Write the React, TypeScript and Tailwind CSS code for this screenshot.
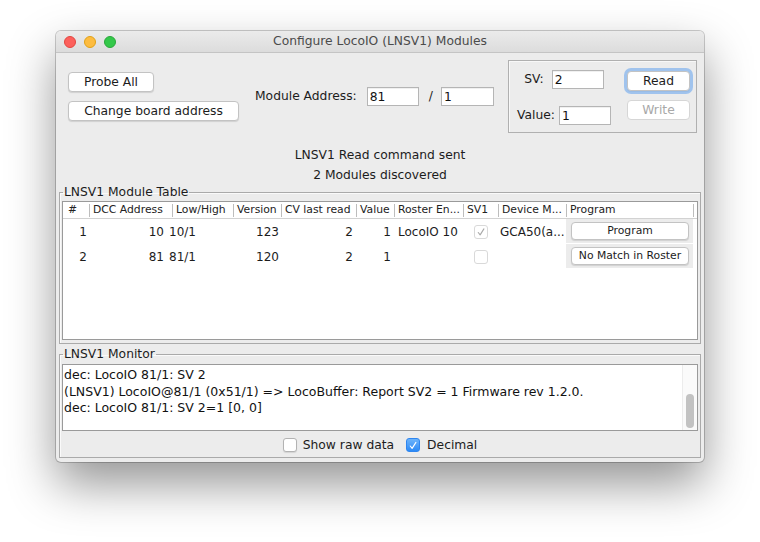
import clsx from 'clsx';
import type { ReactNode } from 'react';

const ui = "font-['DejaVu_Sans',sans-serif]";

function Btn({
  children,
  className,
  disabled,
  focused,
  small,
}: {
  children: ReactNode;
  className?: string;
  disabled?: boolean;
  focused?: boolean;
  small?: boolean;
}) {
  return (
    <button
      type="button"
      disabled={disabled}
      className={clsx(
        'flex items-center justify-center whitespace-nowrap rounded-[4px] border bg-white leading-none shadow-[0_1px_1px_rgba(0,0,0,0.12)]',
        ui,
        small ? 'h-[18px] text-[10.8px]' : 'h-[20px] text-[12.3px]',
        disabled ? 'border-[#d6d6d6] text-[#a8a8a8] shadow-none' : 'border-[#c3c3c3] text-[#1c1c1c]',
        focused && 'border-[#6d9fe0] ring-[3px] ring-[#80b2ee]/70',
        className,
      )}
    >
      {children}
    </button>
  );
}

function Field({ value, className }: { value: string; className?: string }) {
  return (
    <input
      readOnly
      value={value}
      className={clsx(
        'h-[19px] border border-[#b5b5b5] bg-white pl-[2px] text-[12.3px] leading-none text-[#111] shadow-[inset_0_1px_0_rgba(0,0,0,0.06)] outline-none',
        ui,
        className,
      )}
    />
  );
}

function Check({ className }: { className?: string }) {
  return (
    <svg viewBox="0 0 14 14" className={className} fill="none">
      <path d="M3.8 7.6 L6 10.3 L10.4 3.4" stroke="currentColor" strokeWidth="1.3" strokeLinecap="round" strokeLinejoin="round" />
    </svg>
  );
}

// mac-ish checkbox; "dim" is the disabled look used inside the table
function Box({ checked, dim }: { checked?: boolean; dim?: boolean }) {
  if (checked && !dim) {
    return (
      <span className="flex size-[14px] items-center justify-center rounded-[3px] border border-[#2f86f0] bg-gradient-to-b from-[#6cb3fa] to-[#2a8af6] text-white">
        <Check className="size-[13px]" />
      </span>
    );
  }
  return (
    <span
      className={clsx(
        'flex size-[14px] items-center justify-center rounded-[3px] border bg-white',
        dim ? 'border-[#d9d9d9] text-[#a9a9a9]' : 'border-[#b3b3b3] shadow-[0_1px_1px_rgba(0,0,0,0.1)]',
      )}
    >
      {checked && <Check className="size-[12px]" />}
    </span>
  );
}

const headers = [
  { label: '#', w: 'w-[26px]' },
  { label: 'DCC Address', w: 'w-[83px]' },
  { label: 'Low/High', w: 'w-[61px]' },
  { label: 'Version', w: 'w-[48px]' },
  { label: 'CV last read', w: 'w-[75px]' },
  { label: 'Value', w: 'w-[38px]' },
  { label: 'Roster En...', w: 'w-[69px]' },
  { label: 'SV1', w: 'w-[35px]' },
  { label: 'Device M...', w: 'w-[68px]' },
  { label: 'Program', w: 'w-[127px]' },
];

const modules = [
  { n: '1', dcc: '10', lowHigh: '10/1', version: '123', cv: '2', value: '1', roster: 'LocoIO 10', sv1: true, device: 'GCA50(a...', action: 'Program' },
  { n: '2', dcc: '81', lowHigh: '81/1', version: '120', cv: '2', value: '1', roster: '', sv1: false, device: '', action: 'No Match in Roster' },
];

const monitorLines = [
  'dec: LocoIO 81/1: SV 2',
  '(LNSV1) LocoIO@81/1 (0x51/1) => LocoBuffer: Report SV2 = 1 Firmware rev 1.2.0.',
  'dec: LocoIO 81/1: SV 2=1 [0, 0]',
];

function Titled({ title, children, className }: { title: string; children: ReactNode; className?: string }) {
  return (
    <fieldset className={clsx('mx-[3px] border border-[#aaaaaa] px-[2px] shadow-[inset_1px_1px_0_#fafafa]', className)}>
      <legend className="ml-[1px] px-[1px] text-[12.3px] leading-[15px] text-[#1c1c1c]">{title}</legend>
      {children}
    </fieldset>
  );
}

export default function App() {
  return (
    <div className={clsx('h-[542px] w-[760px] overflow-hidden bg-white pt-[31px] pl-[56px]', ui)}>
      <div className="w-[648px] overflow-hidden rounded-[5px] bg-[#ececec] text-[#1c1c1c] shadow-[0_22px_48px_rgba(0,0,0,0.42),0_0_0_1px_rgba(0,0,0,0.2)]">
        {/* title bar */}
        <div className="grid h-[22px] grid-cols-[1fr_auto_1fr] items-center border-b border-[#c4c4c4] bg-gradient-to-b from-[#ebebeb] to-[#dcdcdc]">
          <div className="flex items-center gap-[8px] pl-[8px]">
            <span className="size-[12px] rounded-full border border-[#e2463f] bg-[#fc605c]" />
            <span className="size-[12px] rounded-full border border-[#e1a116] bg-[#fdbc40]" />
            <span className="size-[12px] rounded-full border border-[#2aa73a] bg-[#34c84a]" />
          </div>
          <div className="text-[12.3px] text-[#4b4b4b]">Configure LocoIO (LNSV1) Modules</div>
          <div />
        </div>

        <div className="pb-[4px] text-[12.3px]">
          {/* address + SV row */}
          <div className="flex items-center pt-[7px] pr-[7px] pl-[12px]">
            <div className="flex w-[171px] flex-col gap-[9px]">
              <Btn className="w-[86px]">Probe All</Btn>
              <Btn className="w-[171px]">Change board address</Btn>
            </div>
            <span className="ml-[16px]">Module Address:</span>
            <Field value="81" className="ml-[10px] w-[52px]" />
            <span className="ml-[10px]">/</span>
            <Field value="1" className="ml-[8px] w-[53px]" />

            <div className="ml-auto flex h-[73px] w-[189px] items-center border border-[#b0b0b0] shadow-[inset_1px_1px_0_#f8f8f8]">
              <div className="flex w-[110px] flex-col items-center gap-[17px] pt-[2px]">
                <div className="flex items-center gap-[8px]">
                  <span>SV:</span>
                  <Field value="2" className="w-[52px]" />
                </div>
                <div className="flex items-center gap-[4px]">
                  <span>Value:</span>
                  <Field value="1" className="w-[52px]" />
                </div>
              </div>
              <div className="mb-[2px] ml-[8px] flex flex-col gap-[9px]">
                <Btn focused className="w-[63px]">Read</Btn>
                <Btn disabled className="w-[63px]">Write</Btn>
              </div>
            </div>
          </div>

          <div className="mt-[12px] text-center leading-[20px]">
            <p>LNSV1 Read command sent</p>
            <p>2 Modules discovered</p>
          </div>

          {/* module table */}
          <Titled title="LNSV1 Module Table" className="pt-[1px] pb-[3px]">
            <div className="h-[139px] border border-[#9a9a9a] bg-white">
              <div className="flex h-[17px] items-center border-b border-[#d2d2d2] text-[10.8px] text-[#222]">
                {headers.map((h, i) => (
                  <div key={h.label} className={clsx('flex h-full items-center', h.w)}>
                    {i > 0 && <span className="h-[13px] w-px bg-[#bdbdbd]" />}
                    <span className={i > 0 ? 'pl-[3px]' : 'pl-[5px]'}>{h.label}</span>
                  </div>
                ))}
                <span className="h-[13px] w-px bg-[#bdbdbd]" />
              </div>
              {modules.map((m) => (
                <div key={m.n} className="flex h-[25px] items-center text-[12px]">
                  <div className="w-[26px] pr-[2px] text-right">{m.n}</div>
                  <div className="w-[78px] pr-[3px] text-right">{m.dcc}</div>
                  <div className="w-[66px] pl-[2px]">{m.lowHigh}</div>
                  <div className="w-[48px] pr-[2px] text-right">{m.version}</div>
                  <div className="w-[75px] pr-[3px] text-right">{m.cv}</div>
                  <div className="w-[38px] pr-[3px] text-right">{m.value}</div>
                  <div className="w-[69px] pl-[4px]">{m.roster}</div>
                  <div className="flex w-[35px] justify-center">
                    <Box dim checked={m.sv1} />
                  </div>
                  <div className="w-[68px] pl-[2px]">{m.device}</div>
                  <div className="flex h-full w-[127px] items-start">
                    <div className="flex h-[24px] w-full items-center bg-[#ececec] pl-[5px]">
                      <Btn small className="w-[118px]">{m.action}</Btn>
                    </div>
                  </div>
                </div>
              ))}
            </div>
          </Titled>

          {/* monitor */}
          <Titled title="LNSV1 Monitor" className="mt-[3px] pt-[2px] pb-[4px]">
            <div className="flex h-[67px] border border-[#9a9a9a] bg-white">
              <div className="flex-1 pt-[2px] pl-[1px] text-[12.5px] leading-[16.5px] text-[#111]">
                {monitorLines.map((line) => (
                  <p key={line} className="whitespace-pre">{line}</p>
                ))}
              </div>
              <div className="flex w-[15px] flex-col justify-end border-l border-[#ececec] bg-[#fafafa] pb-[2px]">
                <div className="mx-auto h-[34px] w-[8px] rounded-full bg-[#c2c2c2]" />
              </div>
            </div>
            <div className="mt-[6px] flex h-[16px] items-center justify-center">
              <label className="flex items-center gap-[6px]">
                <Box />
                <span>Show raw data</span>
              </label>
              <label className="ml-[12px] flex items-center gap-[7px]">
                <Box checked />
                <span>Decimal</span>
              </label>
            </div>
          </Titled>
        </div>
      </div>
    </div>
  );
}
